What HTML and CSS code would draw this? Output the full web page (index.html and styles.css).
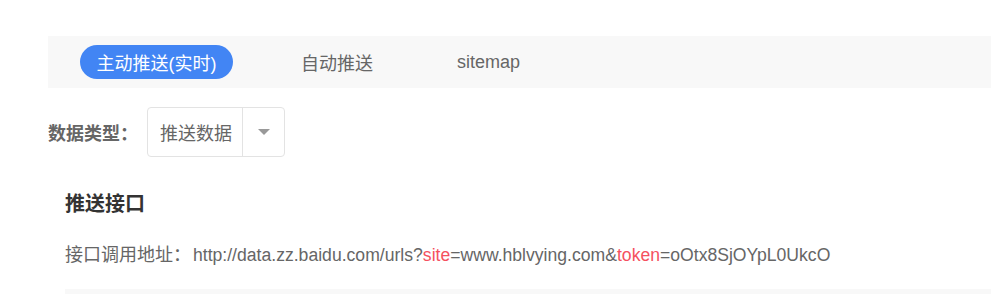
FILE: index.html
```html
<!DOCTYPE html>
<html lang="zh">
<head>
<meta charset="utf-8">
<link rel="stylesheet" href="styles.css">
</head>
<body>
<div class="page">
  <div class="tabs">
    <span class="tab active">主动推送(实时)</span>
    <span class="tab">自动推送</span>
    <span class="tab">sitemap</span>
  </div>
  <div class="field">
    <span class="field-label">数据类型：</span>
    <div class="select">
      <span class="select-value">推送数据</span>
      <span class="select-arrow"><span class="caret"></span></span>
    </div>
  </div>
  <div class="section">
    <h3 class="section-title">推送接口</h3>
    <div class="api-line"><span class="api-label">接口调用地址：</span><span class="api-url">http://data.zz.baidu.com/urls?<span class="hl">site</span>=www.hblvying.com&amp;<span class="hl">token</span>=oOtx8SjOYpL0UkcO</span></div>
    <div class="code-block"></div>
  </div>
</div>
</body>
</html>
```

FILE: styles.css
```css
html, body {
  margin: 0;
  padding: 0;
  background: #fff;
}
body {
  font-family: "Liberation Sans", "Noto Sans CJK SC", sans-serif;
  color: #666;
  font-size: 18px;
}
.page {
  padding: 36px 0 0 48px;
}
.tabs {
  display: flex;
  align-items: center;
  height: 52px;
  background: #f8f8f8;
  padding-left: 32px;
}
.tab {
  display: flex;
  align-items: center;
  height: 34px;
  padding: 0 16px;
  margin-right: 52px;
  border-radius: 17px;
  color: #666;
  white-space: nowrap;
}
.tab.active {
  background: #4285f4;
  color: #fff;
  width: 121px;
  justify-content: center;
}
.field {
  display: flex;
  align-items: center;
  margin-top: 19px;
}
.field-label {
  font-weight: bold;
  width: 99px;
  color: #666;
}
.select {
  display: flex;
  height: 48px;
  border: 1px solid #e3e3e3;
  border-radius: 4px;
}
.select-value {
  display: flex;
  align-items: center;
  width: 82px;
  padding-left: 12px;
  border-right: 1px solid #e3e3e3;
  color: #666;
}
.select-arrow {
  display: flex;
  align-items: center;
  justify-content: center;
  width: 41px;
}
.caret {
  width: 0;
  height: 0;
  border-left: 6px solid transparent;
  border-right: 6px solid transparent;
  border-top: 6px solid #999;
}
.section {
  padding-left: 17px;
}
.section-title {
  margin: 32px 0 0;
  font-size: 20px;
  line-height: 30px;
  font-weight: bold;
  color: #333;
}
.api-line {
  margin-top: 21px;
  line-height: 30px;
  white-space: nowrap;
}
.api-label {
  margin-right: 2px;
}
.api-url {
  font-size: 17.6px;
  color: #666;
}
.hl {
  color: #f5515f;
}
.code-block {
  margin-top: 19px;
  height: 60px;
  background: #f8f8f8;
}
```
